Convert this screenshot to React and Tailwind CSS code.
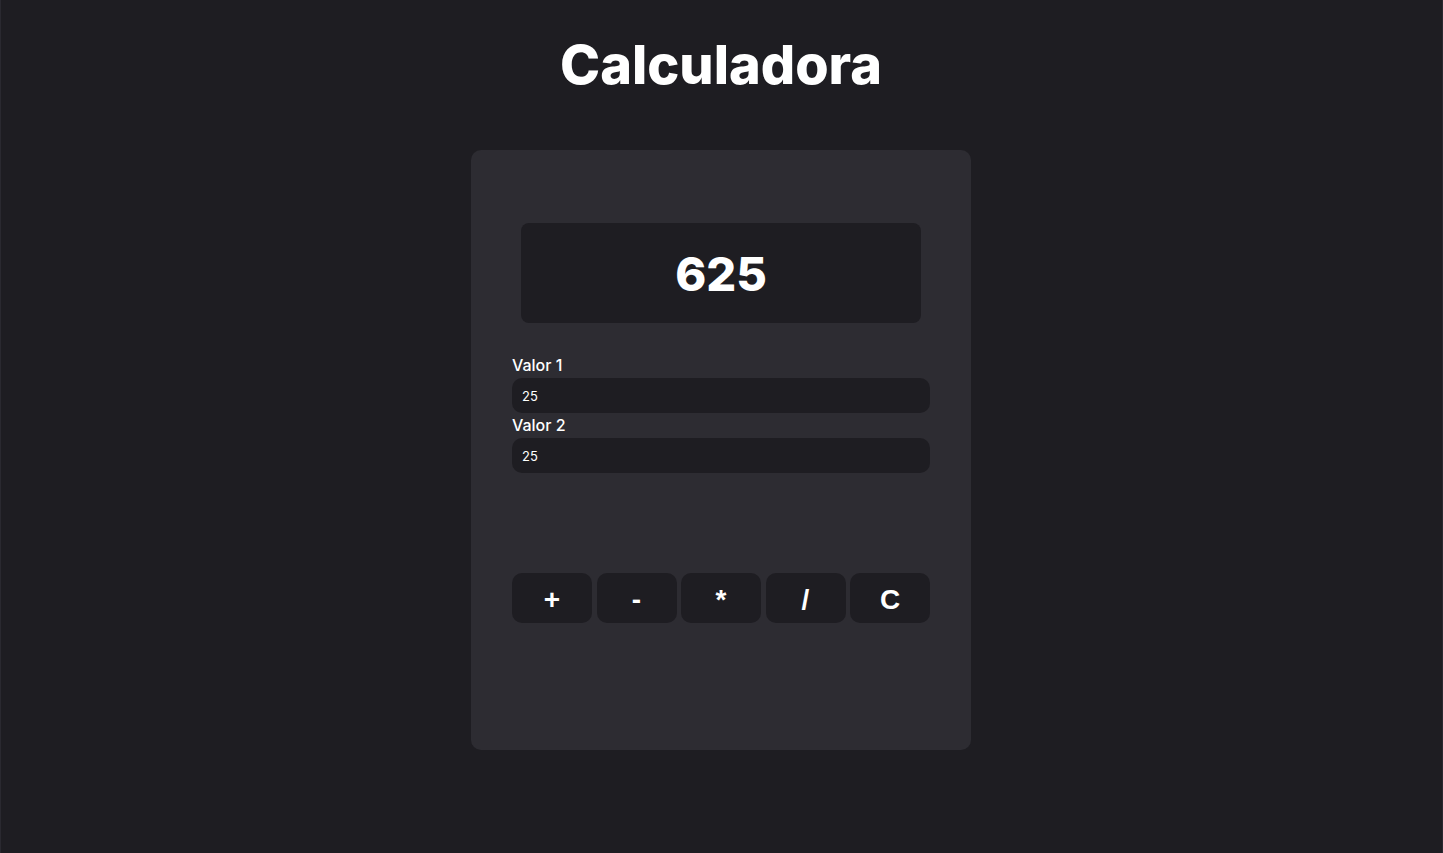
import { useState } from 'react';

const ops = ['+', '-', '*', '/', 'C'];

export default function App() {
  const [valor1, setValor1] = useState('25');
  const [valor2, setValor2] = useState('25');
  const [resultado, setResultado] = useState('625');

  const calcular = (op) => {
    const a = parseFloat(valor1) || 0;
    const b = parseFloat(valor2) || 0;
    if (op === 'C') {
      setValor1('');
      setValor2('');
      setResultado('0');
      return;
    }
    if (op === '+') setResultado(String(a + b));
    if (op === '-') setResultado(String(a - b));
    if (op === '*') setResultado(String(a * b));
    if (op === '/') setResultado(b === 0 ? 'Erro' : String(a / b));
  };

  return (
    <div
      className="min-h-screen bg-[#1e1d22] border-x border-[#2a2930] pr-[1px] flex flex-col items-center text-white"
      style={{ fontFamily: 'Inter, "Noto Sans", sans-serif' }}
    >
      <h1 className="mt-[34px] text-[54px] leading-[62px] font-extrabold">
        Calculadora
      </h1>

      {/* Card */}
      <div className="mt-[54px] w-[500px] h-[600px] rounded-[10px] bg-[#2d2c32] flex flex-col items-center pt-[73px] px-[41px]">
        <div className="w-[400px] h-[100px] rounded-lg bg-[#1e1d22] flex items-center justify-center">
          <span className="text-[47px] font-extrabold leading-none">{resultado}</span>
        </div>

        <div className="w-full mt-[33px] flex flex-col">
          <label className="text-[16px] leading-[18px] pb-[4px] font-medium text-white">Valor 1</label>
          <input
            type="text"
            value={valor1}
            onChange={(e) => setValor1(e.target.value)}
            className="w-full h-[35px] rounded-[10px] bg-[#1e1d22] px-[10px] text-[13px] text-white outline-none"
          />
          <label className="mt-[3px] text-[16px] leading-[18px] pb-[4px] font-medium text-white">Valor 2</label>
          <input
            type="text"
            value={valor2}
            onChange={(e) => setValor2(e.target.value)}
            className="w-full h-[35px] rounded-[10px] bg-[#1e1d22] px-[10px] text-[13px] text-white outline-none"
          />
        </div>

        <div className="w-full mt-[100px] flex gap-[4.5px]">
          {ops.map((op) => (
            <button
              key={op}
              onClick={() => calcular(op)}
              className="w-[80px] h-[50px] rounded-[10px] bg-[#1e1d22] text-white text-[28px] font-bold flex items-center justify-center pt-[3px]"
              style={{ fontFamily: '"Liberation Sans", Arial, sans-serif' }}
            >
              {op}
            </button>
          ))}
        </div>
      </div>
    </div>
  );
}
